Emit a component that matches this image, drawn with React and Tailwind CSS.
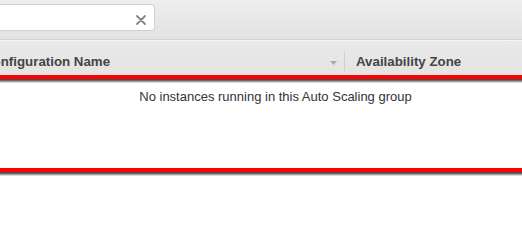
export default function App() {
  const Shadow = () => (
    <div>
      <div className="h-[4px] bg-[#ff0000]" />
      <div className="h-[1px] bg-[#4a4a4a]" />
      <div className="h-[1px] bg-[#6a6a6a]" />
      <div className="h-[1px] bg-[#a0a0a0]" />
      <div className="h-[1px] bg-[#dcdcdc]" />
    </div>
  );
  return (
    <div className="w-[522px] h-[245px] overflow-hidden bg-white font-['Liberation_Sans',Arial,sans-serif]">
      <div className="h-[40px] bg-gradient-to-b from-[#eeeeee] to-[#e2e2e2] border-b border-[#d3d3d3] pt-[4px]">
        <div className="w-[155px] h-[27px] bg-white border border-l-0 border-[#d0d0d0] rounded-r-[4px] flex justify-end items-start pt-[10px] pr-[8px]">
          <svg width="10" height="10" viewBox="0 0 10 10">
            <path d="M1 1L9 9M9 1L1 9" stroke="#858585" strokeWidth="1.8" strokeLinecap="round" />
          </svg>
        </div>
      </div>
      <div className="h-[35px] bg-gradient-to-b from-[#e9e9e9] to-[#e4e4e4] border-t border-[#f6f6f6] flex items-start text-[13.3px] leading-[15px] font-bold text-[#444]">
        <div className="w-[344px] flex items-start">
          <span className="ml-[-17px] mt-[13px] whitespace-nowrap">Configuration Name</span>
          <svg className="ml-auto mr-[7px] mt-[20px]" width="7" height="4" viewBox="0 0 7 4">
            <path d="M0 0H7L3.5 4Z" fill="#aaaaaa" />
          </svg>
        </div>
        <div className="w-[1px] h-[19px] mt-[11px] bg-[#cfcfcf]" />
        <span className="ml-[11px] mt-[13px] whitespace-nowrap">Availability Zone</span>
      </div>
      <Shadow />
      <div className="h-[85px] pt-[6px] pl-[29px] flex justify-center text-[13px] leading-[15px] text-[#333]">
        <span className="whitespace-nowrap">No instances running in this Auto Scaling group</span>
      </div>
      <Shadow />
    </div>
  );
}
